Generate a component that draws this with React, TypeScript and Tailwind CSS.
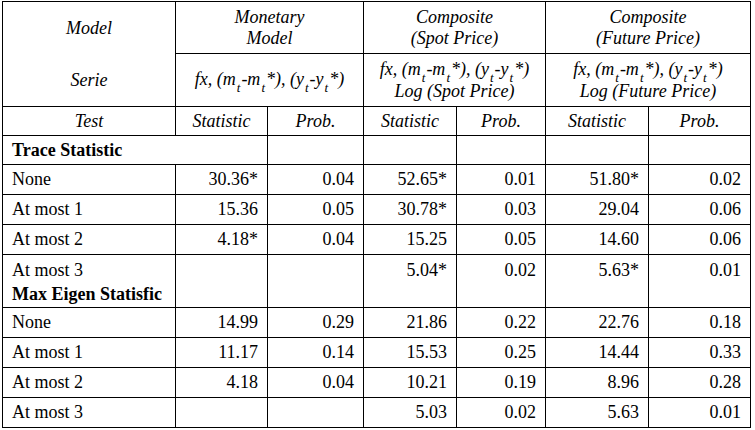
const rows1 = [
  ["None", "30.36*", "0.04", "52.65*", "0.01", "51.80*", "0.02"],
  ["At most 1", "15.36", "0.05", "30.78*", "0.03", "29.04", "0.06"],
  ["At most 2", "4.18*", "0.04", "15.25", "0.05", "14.60", "0.06"],
];

const rows2 = [
  ["None", "14.99", "0.29", "21.86", "0.22", "22.76", "0.18"],
  ["At most 1", "11.17", "0.14", "15.53", "0.25", "14.44", "0.33"],
  ["At most 2", "4.18", "0.04", "10.21", "0.19", "8.96", "0.28"],
  ["At most 3", "", "", "5.03", "0.02", "5.63", "0.01"],
];

const cell = "border-r border-b border-black";
const sub = "text-[13px] align-[-4px] leading-none ml-px mr-px";

function Series({ log }: { log?: string }) {
  return (
    <div className="leading-[21px]">
      <div className="whitespace-nowrap">
        fx, (m<sub className={sub}>t</sub>-m<sub className={sub}>t</sub>*), (y<sub className={sub}>t</sub>-y
        <sub className={sub}>t</sub>*)
      </div>
      {log ? <div>{log}</div> : null}
    </div>
  );
}

function DataRow({ r }: { r: string[] }) {
  return (
    <>
      <div className={`${cell} pl-[9px] flex items-center`}>{r[0]}</div>
      {r.slice(1).map((v, i) => (
        <div key={i} className={`${cell} pr-[9px] flex items-center justify-end`}>
          {v}
        </div>
      ))}
    </>
  );
}

export default function App() {
  return (
    <div className="w-[755px] h-[430px] bg-white pl-[2px] pt-[1px] text-black text-[18px] font-['Liberation_Serif','Times_New_Roman',Tinos,'DejaVu_Serif',serif]">
      <div className="grid w-max border-l border-t border-black grid-cols-[173px_92px_96px_93px_89px_103px_102px] grid-rows-[52px_53px_29px_29px_30px_30px_30px_53px_30px_30px_30px_30px]">
        {/* header */}
        <div className={`${cell} row-span-2 grid grid-rows-[52px_53px] italic`}>
          <div className="flex items-center justify-center">Model</div>
          <div className="flex items-center justify-center">Serie</div>
        </div>
        <div className={`${cell} col-span-2 flex items-center justify-center text-center italic leading-[21px]`}>
          Monetary
          <br />
          Model
        </div>
        <div className={`${cell} col-span-2 flex items-center justify-center text-center italic leading-[21px]`}>
          Composite
          <br />
          (Spot Price)
        </div>
        <div className={`${cell} col-span-2 flex items-center justify-center text-center italic leading-[21px]`}>
          Composite
          <br />
          (Future Price)
        </div>
        <div className={`${cell} col-span-2 flex items-center justify-center text-center italic`}>
          <Series />
        </div>
        <div className={`${cell} col-span-2 flex items-center justify-center text-center italic`}>
          <Series log="Log (Spot Price)" />
        </div>
        <div className={`${cell} col-span-2 flex items-center justify-center text-center italic`}>
          <Series log="Log (Future Price)" />
        </div>
        {["Test", "Statistic", "Prob.", "Statistic", "Prob.", "Statistic", "Prob."].map((h, i) => (
          <div key={i} className={`${cell} flex items-center justify-center italic`}>
            {h}
          </div>
        ))}

        {/* trace statistic */}
        <div className={`${cell} col-span-2 pl-[9px] flex items-center font-bold`}>Trace Statistic</div>
        <div className={cell}></div>
        <div className={cell}></div>
        <div className={cell}></div>
        <div className={cell}></div>
        <div className={cell}></div>
        {rows1.map((r, i) => (
          <DataRow key={i} r={r} />
        ))}

        {/* at most 3 / max eigen */}
        <div className={`${cell} pl-[9px] pt-[3px] leading-[24px]`}>
          <div>At most 3</div>
          <div className="font-bold">Max Eigen Statisfic</div>
        </div>
        <div className={cell}></div>
        <div className={cell}></div>
        <div className={`${cell} pr-[9px] pt-[3px] leading-[24px] text-right`}>5.04*</div>
        <div className={`${cell} pr-[9px] pt-[3px] leading-[24px] text-right`}>0.02</div>
        <div className={`${cell} pr-[9px] pt-[3px] leading-[24px] text-right`}>5.63*</div>
        <div className={`${cell} pr-[9px] pt-[3px] leading-[24px] text-right`}>0.01</div>

        {rows2.map((r, i) => (
          <DataRow key={i} r={r} />
        ))}
      </div>
    </div>
  );
}
